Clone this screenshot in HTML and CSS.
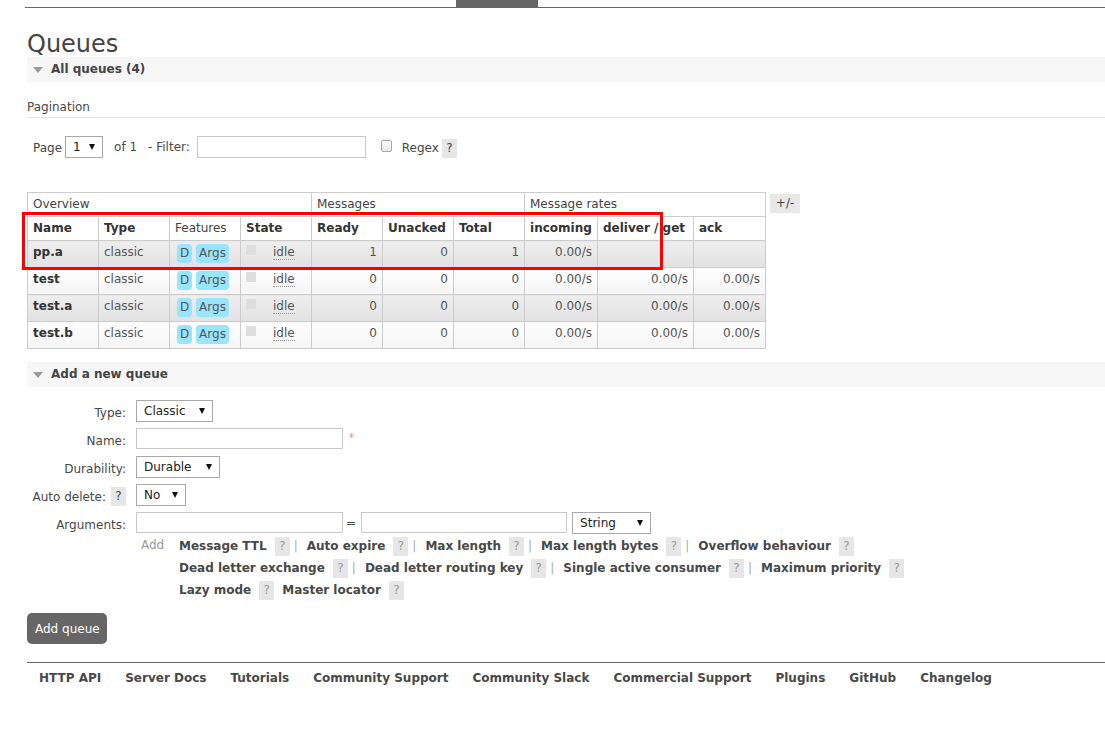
FILE: index.html
```html
<!DOCTYPE html>
<html lang="en">
<head>
<meta charset="utf-8">
<title>Queues</title>
<link rel="stylesheet" href="styles.css">
</head>
<body>
<div class="topbar"><span class="tab-active"></span></div>
<main class="main">
  <h1 class="title">Queues</h1>

  <section class="section">
    <h2 class="section-head"><span class="tri"></span>All queues (4)</h2>
    <h3 class="subhead">Pagination</h3>
    <div class="pager">
      <span class="pg-label">Page</span>
      <span class="select sel-page"><span class="sel-text">1</span><span class="caret"></span></span>
      <span class="of">of 1</span>
      <span class="filter-label">- Filter:</span>
      <input class="input filter-input" type="text">
      <span class="checkbox"></span>
      <span class="regex">Regex</span>
      <span class="help dark">?</span>
    </div>

    <div class="table-wrap">
      <div class="table-box">
        <table class="list">
          <colgroup>
            <col class="c71"><col class="c71"><col class="c71"><col class="c71">
            <col class="c71"><col class="c71"><col class="c71">
            <col class="c73"><col class="c96"><col class="c72">
          </colgroup>
          <thead>
            <tr class="grp-row">
              <th colspan="4">Overview</th>
              <th colspan="3">Messages</th>
              <th colspan="3">Message rates</th>
            </tr>
            <tr class="col-row">
              <th class="sort">Name</th>
              <th class="sort">Type</th>
              <th>Features</th>
              <th class="sort">State</th>
              <th class="sort">Ready</th>
              <th class="sort">Unacked</th>
              <th class="sort">Total</th>
              <th class="sort">incoming</th>
              <th class="sort">deliver / get</th>
              <th class="sort">ack</th>
            </tr>
          </thead>
          <tbody>
            <tr class="alt1">
              <td class="qname">pp.a</td>
              <td>classic</td>
              <td><span class="badge">D</span> <span class="badge">Args</span></td>
              <td><span class="state-sq"></span><abbr class="state">idle</abbr></td>
              <td class="num">1</td>
              <td class="num">0</td>
              <td class="num">1</td>
              <td class="num">0.00/s</td>
              <td class="num"></td>
              <td class="num"></td>
            </tr>
            <tr class="alt2">
              <td class="qname">test</td>
              <td>classic</td>
              <td><span class="badge">D</span> <span class="badge">Args</span></td>
              <td><span class="state-sq"></span><abbr class="state">idle</abbr></td>
              <td class="num">0</td>
              <td class="num">0</td>
              <td class="num">0</td>
              <td class="num">0.00/s</td>
              <td class="num">0.00/s</td>
              <td class="num">0.00/s</td>
            </tr>
            <tr class="alt1">
              <td class="qname">test.a</td>
              <td>classic</td>
              <td><span class="badge">D</span> <span class="badge">Args</span></td>
              <td><span class="state-sq"></span><abbr class="state">idle</abbr></td>
              <td class="num">0</td>
              <td class="num">0</td>
              <td class="num">0</td>
              <td class="num">0.00/s</td>
              <td class="num">0.00/s</td>
              <td class="num">0.00/s</td>
            </tr>
            <tr class="alt2">
              <td class="qname">test.b</td>
              <td>classic</td>
              <td><span class="badge">D</span> <span class="badge">Args</span></td>
              <td><span class="state-sq"></span><abbr class="state">idle</abbr></td>
              <td class="num">0</td>
              <td class="num">0</td>
              <td class="num">0</td>
              <td class="num">0.00/s</td>
              <td class="num">0.00/s</td>
              <td class="num">0.00/s</td>
            </tr>
          </tbody>
        </table>
        <div class="annot"></div>
      </div>
      <span class="plusminus">+/-</span>
    </div>
  </section>

  <section class="section">
    <h2 class="section-head add-head"><span class="tri"></span>Add a new queue</h2>
    <div class="form">
      <span class="lbl">Type:</span>
      <div class="ctl"><span class="select sel-type"><span class="sel-text">Classic</span><span class="caret"></span></span></div>

      <span class="lbl">Name:</span>
      <div class="ctl"><input class="input w-name" type="text"><span class="req">*</span></div>

      <span class="lbl">Durability:</span>
      <div class="ctl"><span class="select sel-dur"><span class="sel-text">Durable</span><span class="caret"></span></span></div>

      <span class="lbl">Auto delete: <span class="help dark">?</span></span>
      <div class="ctl"><span class="select sel-no"><span class="sel-text">No</span><span class="caret"></span></span></div>

      <span class="lbl">Arguments:</span>
      <div class="ctl">
        <input class="input w-arg" type="text"><span class="eq">=</span><input class="input w-arg2" type="text">
        <span class="select sel-str"><span class="sel-text">String</span><span class="caret"></span></span>
      </div>
    </div>

    <div class="args-add">
      <span class="add-label">Add</span>
      <div class="arg-lines">
        <div class="arg-line">
          <span class="arg">Message TTL</span><span class="help">?</span><span class="sep">|</span>
          <span class="arg">Auto expire</span><span class="help">?</span><span class="sep">|</span>
          <span class="arg">Max length</span><span class="help">?</span><span class="sep">|</span>
          <span class="arg">Max length bytes</span><span class="help">?</span><span class="sep">|</span>
          <span class="arg">Overflow behaviour</span><span class="help">?</span>
        </div>
        <div class="arg-line">
          <span class="arg">Dead letter exchange</span><span class="help">?</span><span class="sep">|</span>
          <span class="arg">Dead letter routing key</span><span class="help">?</span><span class="sep">|</span>
          <span class="arg">Single active consumer</span><span class="help">?</span><span class="sep">|</span>
          <span class="arg">Maximum priority</span><span class="help">?</span>
        </div>
        <div class="arg-line">
          <span class="arg">Lazy mode</span><span class="help">?</span>
          <span class="arg arg-gap">Master locator</span><span class="help">?</span>
        </div>
      </div>
    </div>

    <button class="btn" type="button">Add queue</button>
  </section>

  <footer class="footer">
    <a class="flink">HTTP API</a>
    <a class="flink">Server Docs</a>
    <a class="flink">Tutorials</a>
    <a class="flink">Community Support</a>
    <a class="flink">Community Slack</a>
    <a class="flink">Commercial Support</a>
    <a class="flink">Plugins</a>
    <a class="flink">GitHub</a>
    <a class="flink">Changelog</a>
  </footer>
</main>
</body>
</html>
```
FILE: styles.css
```css
* { box-sizing: border-box; }

html, body {
  margin: 0;
  padding: 0;
  background: #fff;
}

body {
  font-family: "DejaVu Sans", Verdana, sans-serif;
  font-size: 12px;
  color: #484848;
  overflow: hidden;
}

/* top header remnant */
.topbar {
  margin-left: 25px;
  height: 8px;
  border-bottom: 1px solid #666;
  padding-left: 431px;
  display: flex;
}
.tab-active {
  display: block;
  width: 82px;
  height: 7px;
  background: #666;
}

.main {
  padding-left: 27px;
}

.title {
  margin: 22px 0 0;
  padding-top: 1px;
  font-size: 24px;
  font-weight: normal;
  line-height: 26px;
  color: #444;
}

.section-head {
  margin: 0;
  height: 25px;
  line-height: 25px;
  background: #f6f6f6;
  font-size: 12px;
  font-weight: bold;
  color: #444;
  display: flex;
  align-items: center;
}
.tri {
  display: inline-block;
  width: 0;
  height: 0;
  border-left: 5.5px solid transparent;
  border-right: 5.5px solid transparent;
  border-top: 6px solid #9a9a9a;
  margin-left: 6px;
  margin-right: 8px;
}

.subhead {
  margin: 17px 0 0;
  font-size: 12px;
  font-weight: normal;
  line-height: 16px;
  padding-bottom: 2px;
  border-bottom: 1px solid #e2e2e2;
  color: #484848;
}

/* pagination */
.pager {
  margin-top: 18px;
  padding-left: 6px;
  height: 22px;
  display: flex;
  align-items: center;
}
.pg-label { margin-right: 3px; margin-top: 2px; }
.of { margin-left: 11px; margin-top: -1px; }
.filter-label { margin-left: 11px; margin-right: 7px; margin-top: -1px; }
.regex { margin-left: 10px; margin-right: 3px; margin-top: 2px; }

.select {
  display: inline-flex;
  align-items: center;
  justify-content: space-between;
  height: 22px;
  border: 1px solid #a9a9a9;
  background: #fff;
  padding: 0 7px 0 7px;
  color: #222;
  font-size: 12px;
}
.sel-text { line-height: 20px; }
.caret {
  width: 0;
  height: 0;
  border-left: 3px solid transparent;
  border-right: 3px solid transparent;
  border-top: 6px solid #111;
}
.sel-page { width: 38px; }

.input {
  display: inline-block;
  height: 22px;
  border: 1px solid #c8c8c8;
  background: #fff;
  padding: 0;
  margin: 0;
  font: inherit;
  outline: none;
}
.filter-input { width: 169px; }

.checkbox {
  display: inline-block;
  width: 11px;
  height: 12px;
  margin-left: 15px;
  border: 1px solid #a6a6a6;
  border-radius: 2px;
  background: linear-gradient(#fdfdfd, #e8e8e8);
  margin-top: -2px;
}

.help {
  display: inline-block;
  width: 15px;
  height: 19px;
  line-height: 19px;
  text-align: center;
  background: #e6e6e6;
  color: #9a9a9a;
  font-weight: normal;
}
.help.dark { color: #444; }
.pager .help { margin-top: 3px; }

/* table */
.table-wrap {
  margin-top: 34px;
  display: flex;
  align-items: flex-start;
}
.table-box {
  position: relative;
}
.list {
  border-collapse: collapse;
  table-layout: fixed;
  width: 739px;
}
.c71 { width: 71px; }
.c72 { width: 72px; }
.c73 { width: 73px; }
.c96 { width: 96px; }

.list th,
.list td {
  border: 1px solid #cccccc;
  text-align: left;
  white-space: nowrap;
  overflow: hidden;
}
.list th {
  padding: 4px 5px;
  line-height: 15px;
  height: 24px;
  font-weight: normal;
  color: #444;
  background: #fff;
}
.list th.sort {
  font-weight: bold;
  color: #333;
}
.list td {
  padding: 2px 5px 4px;
  line-height: 19px;
  height: 26px;
  vertical-align: top;
  color: #555;
}
.list td.qname {
  font-weight: bold;
  color: #333;
}
.list td.num { text-align: right; }

.alt1 td { background: linear-gradient(#eeeeee, #e2e2e2); }
.alt2 td { background: linear-gradient(#fdfdfd, #f5f5f5); }

.badge {
  display: inline-block;
  height: 19px;
  line-height: 19px;
  padding: 0 3px;
  border-radius: 4px;
  background: #99e5fd;
  color: #555;
  vertical-align: top;
  margin-top: 1px;
}
.badge:first-child { margin-left: 2px; }

.state-sq {
  display: inline-block;
  width: 10px;
  height: 10px;
  background: #dedede;
  vertical-align: top;
  margin-top: 2px;
  margin-right: 17px;
}
.state {
  text-decoration: none;
  border-bottom: 1px dotted #999;
}

.annot {
  position: absolute;
  left: -5px;
  top: 20px;
  width: 641px;
  height: 58px;
  border: 3px solid #ff0000;
  pointer-events: none;
}

.plusminus {
  margin-left: 4px;
  margin-top: 2px;
  width: 30px;
  height: 19px;
  line-height: 19px;
  text-align: center;
  background: #e8e8e8;
  color: #444;
}

/* add new queue */
.add-head { margin-top: 13px; }

.form {
  margin-top: 13px;
  display: grid;
  grid-template-columns: 99px auto;
  grid-auto-rows: 22px;
  column-gap: 10px;
  row-gap: 6px;
}
.lbl {
  display: flex;
  align-items: center;
  justify-content: flex-end;
  color: #484848;
  padding-top: 3px;
  white-space: nowrap;
}
.lbl .help { margin-left: 5px; margin-top: -1px; }
.ctl {
  display: flex;
  align-items: center;
}
.sel-type { width: 77px; }
.sel-dur { width: 84px; }
.sel-no { width: 50px; }
.sel-str { width: 79px; margin-left: 5px; }
.w-name { width: 207px; height: 21px; align-self: flex-start; }
.w-arg { width: 207px; height: 21px; align-self: flex-start; }
.w-arg2 { width: 206px; height: 21px; align-self: flex-start; }
.req {
  color: #f77;
  font-size: 10px;
  margin-left: 6px;
  margin-top: -3px;
}
.eq {
  margin: 0 5px 0 3px;
  color: #484848;
}

.args-add {
  margin-top: 1px;
  margin-left: 114px;
  display: flex;
}
.add-label {
  width: 38px;
  color: #999;
  line-height: 20px;
}
.arg-lines {
  display: flex;
  flex-direction: column;
}
.arg-line {
  display: flex;
  align-items: center;
  height: 22px;
  white-space: nowrap;
}
.arg {
  font-weight: bold;
  color: #484848;
}
.arg-line .help { margin-left: 8px; }
.sep {
  color: #aaa;
  margin: 0 9px 0 4px;
}
.arg-gap { margin-left: 8px; }

.btn {
  display: block;
  margin-top: 12px;
  width: 80px;
  height: 31px;
  padding: 0 0 0 8px;
  text-align: left;
  border: none;
  border-radius: 5px;
  background: #666;
  color: #fff;
  font-family: inherit;
  font-size: 12px;
}

/* footer */
.footer {
  margin-top: 18px;
  border-top: 1px solid #666;
  padding: 7px 0 0 0;
  display: flex;
  white-space: nowrap;
}
.flink {
  padding: 0 12px;
  line-height: 16px;
  font-weight: bold;
  color: #484848;
}
```
